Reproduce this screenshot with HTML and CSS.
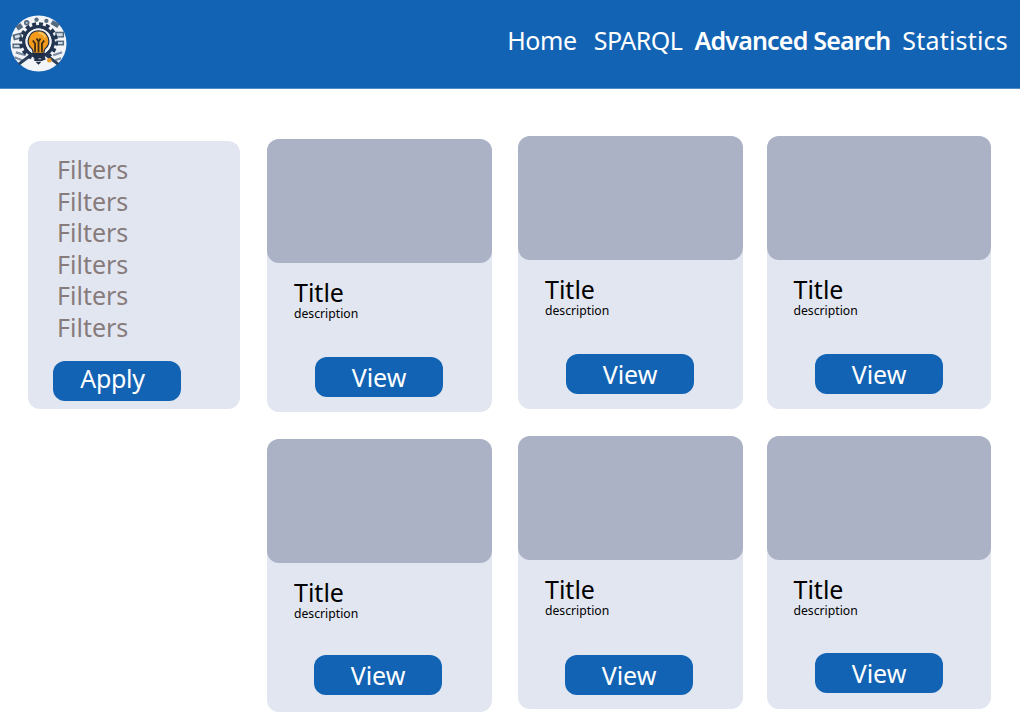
FILE: index.html
```html
<!DOCTYPE html>
<html lang="en">
<head>
<meta charset="utf-8">
<title>Advanced Search</title>
<link rel="stylesheet" href="styles.css">
</head>
<body>
<header class="topbar">
  <svg class="logo" viewBox="0 0 58 58" width="57" height="57" aria-label="logo">
    <circle cx="29" cy="29" r="28.5" fill="#f2f4f7"/>
    <!-- surrounding tools -->
    <g fill="#55697f">
      <circle cx="17" cy="8" r="2.800"/><circle cx="27" cy="4.800" r="2.200"/><circle cx="37" cy="6" r="2.200"/>
      <rect x="42" y="7" width="8" height="4.500" transform="rotate(30 46 9)"/>
      <rect x="46" y="17" width="9" height="6"/>
      <rect x="47" y="26" width="8" height="5"/>
      <rect x="3" y="19" width="9" height="6" transform="rotate(-15 7 22)"/>
      <rect x="2.500" y="29" width="9" height="5"/>
      <rect x="7" y="10" width="6" height="5" transform="rotate(-35 9 13)"/>
    </g>
    <g fill="#d3dbe4">
      <rect x="47.500" y="18.500" width="6" height="3"/><rect x="48.500" y="27.500" width="5" height="2"/>
      <rect x="5" y="20.500" width="5" height="3" transform="rotate(-15 7 22)"/><rect x="4" y="30.500" width="6" height="2"/>
      <circle cx="17" cy="8" r="1"/>
    </g>
    <path d="M6 38l10 3M4.500 43l8 3" stroke="#7c8da1" stroke-width="2.200"/>
    <path d="M9 50l12-9" stroke="#2c3f58" stroke-width="3"/>
    <path d="M53 38l-9 3M52 44l-6 2" stroke="#7c8da1" stroke-width="2.200"/>
    <path d="M49 50l-12-9" stroke="#2c3f58" stroke-width="3"/>
    <!-- gear: ring plus teeth -->
    <circle cx="29" cy="27" r="18" fill="none" stroke="#22344f" stroke-width="3.500" stroke-dasharray="4 3.070"/>
    <circle cx="29" cy="27" r="15" fill="none" stroke="#22344f" stroke-width="3.500"/>
    <circle cx="29" cy="27" r="13.200" fill="#f2f4f7"/>
    <!-- bulb -->
    <path d="M29 16a10.500 10.500 0 0 0-6.500 18.700q1 1.500 1 4.300h11q0-2.800 1-4.300A10.500 10.500 0 0 0 29 16z" fill="#f29a1c" stroke="#1d2c44" stroke-width="1.200"/>
    <path d="M29 18a8 8 0 0 1 7 5" fill="none" stroke="#fbc765" stroke-width="2"/>
    <path d="M25.500 38V29l-2.300-3M29 38V27l-2-3M29 27l2-3M32.500 38V29l2.300-3" stroke="#3a2a18" stroke-width="1.800" fill="none"/>
    <path d="M23 39.500h12v2H23zM24 42.300h10v1.900H24zM25 45h8v1.900h-8z" fill="#1d2c44"/>
    <path d="M26 47.500h6l-3 3z" fill="#1d2c44"/>
    <circle cx="40" cy="46" r="2.300" fill="#ec9a2b"/>
  </svg>
  <nav class="nav">
    <a class="nav-link home">Home</a>
    <a class="nav-link sparql">SPARQL</a>
    <a class="nav-link active">Advanced Search</a>
    <a class="nav-link stats">Statistics</a>
  </nav>
</header>
<main class="content">
  <aside class="filters">
    <ul class="filter-list">
      <li>Filters</li><li>Filters</li><li>Filters</li><li>Filters</li><li>Filters</li><li>Filters</li>
    </ul>
    <button class="btn apply">Apply</button>
  </aside>
  <section class="cards">
    <article class="card low">
      <div class="thumb"></div>
      <h2>Title</h2><p>description</p>
      <button class="btn view">View</button>
    </article>
    <article class="card">
      <div class="thumb"></div>
      <h2>Title</h2><p>description</p>
      <button class="btn view">View</button>
    </article>
    <article class="card">
      <div class="thumb"></div>
      <h2>Title</h2><p>description</p>
      <button class="btn view">View</button>
    </article>
    <article class="card low">
      <div class="thumb"></div>
      <h2>Title</h2><p>description</p>
      <button class="btn view b-left">View</button>
    </article>
    <article class="card">
      <div class="thumb"></div>
      <h2>Title</h2><p>description</p>
      <button class="btn view b-down">View</button>
    </article>
    <article class="card">
      <div class="thumb"></div>
      <h2>Title</h2><p>description</p>
      <button class="btn view b-last">View</button>
    </article>
  </section>
</main>
</body>
</html>
```

FILE: styles.css
```css
* { box-sizing: border-box; }
html, body { margin: 0; padding: 0; }
body {
  width: 1020px;
  height: 727px;
  overflow: hidden;
  background: #fff;
  font-family: "Noto Sans", "Open Sans", sans-serif;
}
.topbar {
  height: 89px;
  background: #1263b4;
  border-bottom: 1px solid #4f8ccb;
  display: flex;
  justify-content: space-between;
  align-items: flex-start;
  padding: 15px 12px 0 10px;
}
.logo { display: block; }
.nav { display: flex; padding-top: 7px; }
.nav-link {
  color: #fff;
  font-size: 25px;
  line-height: 36px;
  margin-left: 12px;
  white-space: nowrap;
}
.nav-link.home { letter-spacing: -0.4px; }
.nav-link.sparql { margin-left: 17px; letter-spacing: -0.5px; }
.nav-link.active { font-weight: 600; letter-spacing: -0.8px; }
.nav-link.stats { letter-spacing: 0.2px; }
.content {
  display: flex;
  align-items: flex-start;
  padding-left: 28px;
}
.filters {
  width: 212px;
  height: 268px;
  margin-top: 52px;
  background: #e2e6f1;
  border-radius: 12px;
  padding: 13px 0 0 25px;
}
.filter-list {
  list-style: none;
  margin: 0 0 18px;
  padding: 0 0 0 4px;
}
.filter-list li {
  color: #877b7b;
  font-size: 25px;
  line-height: 31.5px;
  height: 31.5px;
}
.btn {
  display: block;
  width: 128px;
  height: 40px;
  border: 0;
  border-radius: 12px;
  background: #1263b4;
  color: #fff;
  font-family: inherit;
  font-size: 25px;
  line-height: 38px;
  padding: 0;
}
.apply { padding: 0 9px 6px 0; line-height: 30px; letter-spacing: -0.3px; }
.cards {
  display: grid;
  grid-template-columns: 225px 225px 225px;
  column-gap: 26px;
  margin-left: 27px;
  margin-top: 47px;
}
.card {
  width: 225px;
  height: 273px;
  margin-bottom: 27px;
  background: #e2e6f1;
  border-radius: 12px;
  display: flex;
  flex-direction: column;
}
.card:nth-child(3n) { margin-left: -2px; width: 224px; }
.card:nth-child(3n) h2, .card:nth-child(3n) p { margin-left: 26.500px; }
.card.low { margin-top: 3px; margin-bottom: 24px; }
.thumb {
  height: 124px;
  background: #abb2c5;
  border-radius: 12px;
  flex: none;
}
.card h2 {
  margin: 14px 0 0 27px;
  color: #000;
  font-size: 25px;
  font-weight: 400;
  line-height: 30px;
}
.card p {
  margin: -1px 0 0 27px;
  color: #000;
  font-size: 12.200px;
  line-height: 15px;
}
.view { margin: 36px 0 0 48px; }
.view.b-left { margin-top: 34px; margin-left: 47px; }
.view.b-down { margin-top: 37px; margin-left: 47px; }
.view.b-last { margin-top: 35px; }
```
